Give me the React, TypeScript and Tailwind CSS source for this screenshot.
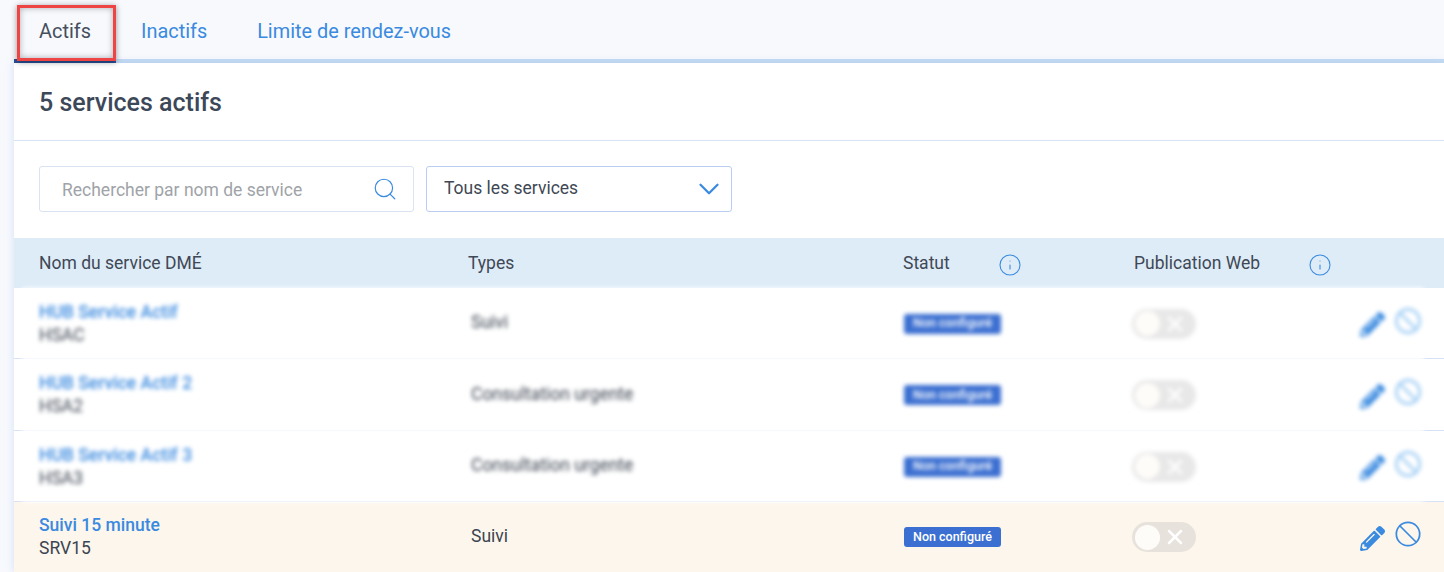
import { Ban, ChevronDown, Info, Search, X } from "lucide-react";
import { FaPencilAlt } from "react-icons/fa";

const rows = [
  { name: "HUB Service Actif", code: "HSAC", type: "Suivi", height: "h-[71px]" },
  { name: "HUB Service Actif 2", code: "HSA2", type: "Consultation urgente", height: "h-[72px]" },
  { name: "HUB Service Actif 3", code: "HSA3", type: "Consultation urgente", height: "h-[71px]" },
];

function RowCells({ name, code, type, blurred }: { name: string; code: string; type: string; blurred: boolean }) {
  return (
    <>
      <div className="w-[449px] shrink-0 pb-px pl-[17px]">
        <div className="text-[17.5px] leading-[23px] font-medium text-[#3a8ae0]">{name}</div>
        <div className="text-[17.5px] leading-[22px] text-[#3c4451]">{code}</div>
      </div>
      <div className="w-[433px] shrink-0 pb-[2px] text-[17.5px] text-[#3c4451]">{type}</div>
      <div className="w-[228px] shrink-0">
        <span className="flex h-[20px] w-[97px] items-center justify-center rounded-[3px] bg-[#3b6fd1] text-[12.5px] font-medium text-white">
          Non configuré
        </span>
      </div>
      <div
        className={`flex h-[30px] w-[64px] shrink-0 items-center rounded-full pl-[3px] ${blurred ? "bg-[#e8e8e8]" : "bg-[#e8e2dc]"}`}
      >
        <span className="h-[25px] w-[25px] rounded-full bg-[#fefcf9]" />
        <X className="ml-[3px] h-[24px] w-[24px] text-white" strokeWidth={2.5} />
      </div>
      <div className="ml-[164px] flex items-center">
        <FaPencilAlt className="mt-[2px] h-[25px] w-[25px] text-[#3a8ae0]" />
        <Ban
          className={`mb-[6px] ml-[9px] h-[28px] w-[28px] ${blurred ? "text-[#a9d2f5]" : "text-[#3a8ae0]"}`}
          strokeWidth={blurred ? 2.5 : 1.5}
        />
      </div>
    </>
  );
}

export default function App() {
  return (
    <div className="relative h-[572px] overflow-hidden bg-[#f7f9fd] pl-[14px] font-['Roboto',sans-serif]">
      <nav className="flex h-[63px] border-b-4 border-[#c5dcf3] pt-[4px] text-[19.9px]">
        <div className="-mb-1 flex h-[59px] w-[102px] items-center border-b-4 border-[#2a5298] pl-[25px] text-[#454f5e]">
          Actifs
        </div>
        <div className="ml-[25px] flex items-center text-[#3a8ae0]">Inactifs</div>
        <div className="ml-[50px] flex items-center text-[#3a8ae0]">Limite de rendez-vous</div>
      </nav>

      {/* annotation drawn over the active tab */}
      <div className="absolute top-[5px] left-[17px] h-[56px] w-[99px] border-[3px] border-[#ef4444] shadow-[0_1px_6px_rgba(0,0,0,0.4),inset_0_0_6px_rgba(0,0,0,0.3)]" />

      <main className="bg-white shadow-[0_0_8px_rgba(150,175,225,0.35)]">
        <div className="flex h-[78px] items-center border-b border-[#d7e2f5] pt-[2px] pl-[25px]">
          <h1 className="text-[25px] font-medium text-[#3c4858]">5 services actifs</h1>
        </div>

        <div className="flex h-[97px] items-center gap-3 pb-px pl-[25px]">
          <div className="flex h-[46px] w-[375px] items-center justify-between rounded-[3px] border border-[#d9e3f3] pr-[15px] pl-[22px] text-[17.5px] text-[#a0a3a8]">
            <span className="pt-[2px]">Rechercher par nom de service</span>
            <Search className="h-[26px] w-[26px] text-[#3a8ae0]" strokeWidth={1.1} />
          </div>
          <div className="flex h-[46px] w-[306px] items-center justify-between rounded-[3px] border border-[#b9cdf0] pr-[5px] pl-[17px] text-[17.5px] text-[#3f4855]">
            <span className="pb-px">Tous les services</span>
            <ChevronDown className="h-[34px] w-[34px] text-[#3a8ae0]" strokeWidth={1.6} />
          </div>
        </div>

        <div className="flex h-[50px] items-center bg-[#deecf8] pl-[25px] text-[17.5px] text-[#3f4855]">
          <div className="w-[429px] shrink-0">Nom du service DMÉ</div>
          <div className="w-[435px] shrink-0">Types</div>
          <div className="flex w-[231px] shrink-0">
            <div className="flex w-[119px] items-center justify-between">
              Statut
              <Info className="mt-[3px] h-[24px] w-[24px] text-[#3a8ae0]" strokeWidth={1.1} />
            </div>
          </div>
          <div className="flex w-[198px] items-center justify-between">
            Publication Web
            <Info className="mt-[3px] h-[24px] w-[24px] text-[#3a8ae0]" strokeWidth={1.1} />
          </div>
        </div>

        {rows.map((row) => (
          <div key={row.code} className={`${row.height} border-b border-[#d7e2f5]`}>
            <div className="mr-5 ml-2 flex h-[calc(100%+1px)] items-center bg-white blur-[2px]">
              <RowCells name={row.name} code={row.code} type={row.type} blurred />
            </div>
          </div>
        ))}

        <div className="flex h-[70px] items-center bg-[#fdf6ec] pl-2">
          <RowCells name="Suivi 15 minute" code="SRV15" type="Suivi" blurred={false} />
        </div>
      </main>
    </div>
  );
}
